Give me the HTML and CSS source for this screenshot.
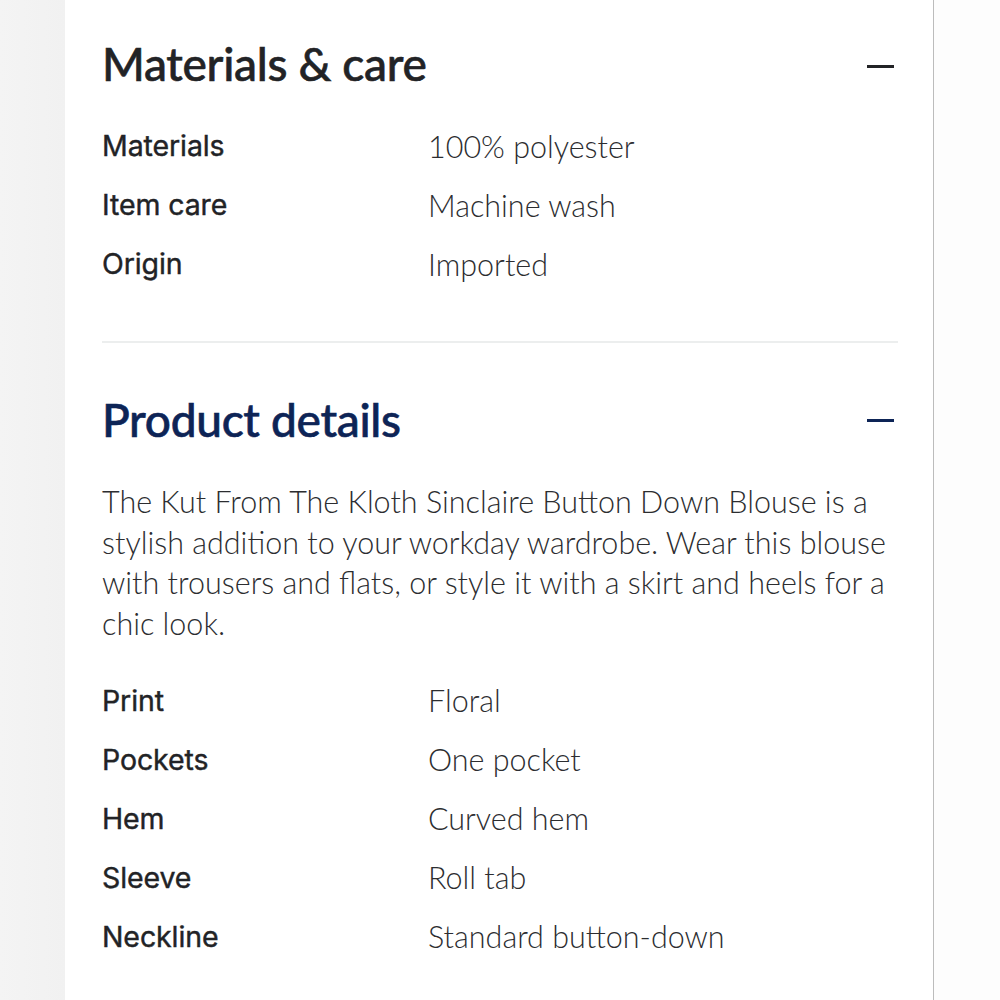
FILE: index.html
```html
<!DOCTYPE html>
<html lang="en">
<head>
<meta charset="utf-8">
<title>Materials &amp; care</title>
<link rel="stylesheet" href="styles.css">
</head>
<body>
<div class="page">
  <div class="gutter"></div>
  <main class="panel">
    <section class="section">
      <div class="section-head">
        <h2 class="title">Materials &amp; care</h2>
        <span class="minus"></span>
      </div>
      <dl class="specs specs-first">
        <div class="row"><dt>Materials</dt><dd>100% polyester</dd></div>
        <div class="row"><dt>Item care</dt><dd>Machine wash</dd></div>
        <div class="row"><dt>Origin</dt><dd>Imported</dd></div>
      </dl>
    </section>
    <hr class="divider">
    <section class="section">
      <div class="section-head">
        <h2 class="title title-navy">Product details</h2>
        <span class="minus minus-navy"></span>
      </div>
      <p class="desc">The Kut From The Kloth Sinclaire Button Down Blouse is a stylish addition to your workday wardrobe. Wear this blouse with trousers and flats, or style it with a skirt and heels for a chic look.</p>
      <dl class="specs">
        <div class="row"><dt>Print</dt><dd>Floral</dd></div>
        <div class="row"><dt>Pockets</dt><dd>One pocket</dd></div>
        <div class="row"><dt>Hem</dt><dd>Curved hem</dd></div>
        <div class="row"><dt>Sleeve</dt><dd>Roll tab</dd></div>
        <div class="row"><dt>Neckline</dt><dd>Standard button-down</dd></div>
      </dl>
    </section>
  </main>
  <div class="aside"></div>
</div>
</body>
</html>
```

FILE: styles.css
```css
html, body {
  margin: 0;
  padding: 0;
}
body {
  background: #f3f3f3;
  font-family: "Lato", "Liberation Sans", sans-serif;
  color: #222326;
}
.page {
  display: flex;
  height: 1000px;
  overflow: hidden;
}
.gutter {
  width: 65px;
  flex: none;
  background: linear-gradient(90deg, #f4f4f4, #f1f1f1);
}
.panel {
  width: 796px;
  flex: none;
  background: #fff;
  padding: 0 35px 0 37px;
  border-right: 1px solid #bcbcbc;
}
.aside {
  flex: 1;
  background: #fdfdfd;
}
.section-head {
  display: flex;
  justify-content: space-between;
  align-items: center;
}
.title {
  margin: 0;
  font-size: 46px;
  font-weight: 500;
  letter-spacing: -0.3px;
  color: #222326;
  -webkit-text-stroke: 0.6px currentColor;
  line-height: 56px;
  padding-top: 36px;
}
.title-navy {
  color: #0d2456;
  padding-top: 0;
}
.minus {
  width: 27px;
  height: 3px;
  background: #222326;
  margin-right: 4px;
  margin-top: 41px;
}
.minus-navy {
  background: #0d2456;
  margin-top: 0;
}
.specs {
  margin: 0;
}
.specs-first {
  margin-top: 24px;
}
.row {
  display: flex;
  height: 59px;
  align-items: center;
}
dt {
  width: 326px;
  font-family: "Inter", "Lato", sans-serif;
  font-size: 28.5px;
  font-weight: 400;
  -webkit-text-stroke: 0.4px currentColor;
  letter-spacing: -0.1px;
  color: #222326;
}
dd {
  margin: 0;
  font-size: 30.5px;
  font-weight: 300;
  color: #2c2d30;
}
.divider {
  border: 0;
  border-top: 2px solid #eceeee;
  margin: 48px 0 49px;
}
.desc {
  margin: 33px 0 27px;
  font-size: 30.5px;
  font-weight: 300;
  line-height: 40.7px;
  color: #2c2d30;
}
```
